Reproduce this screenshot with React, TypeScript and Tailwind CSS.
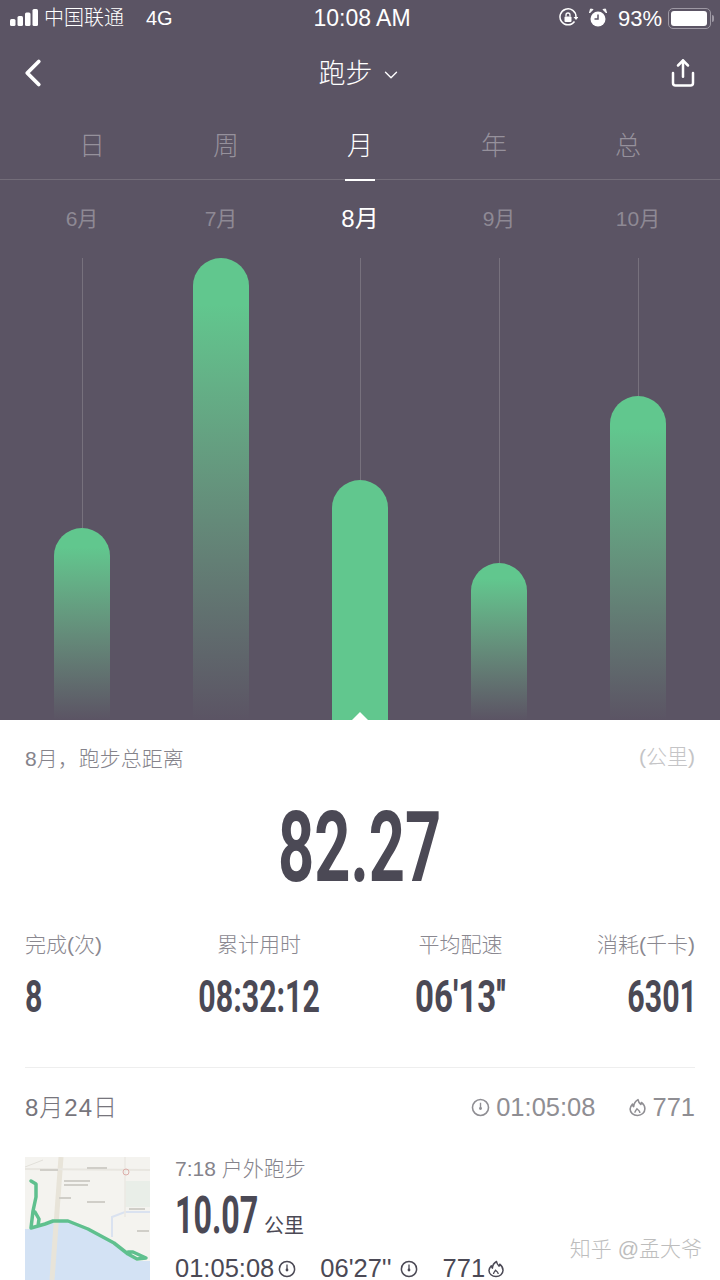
import { ChevronDown, ChevronLeft, Share } from 'lucide-react'

const FONT = '"Liberation Sans", "Noto Sans CJK SC", sans-serif'

const tabs = ['日', '周', '月', '年', '总']

const months = [
  { label: '6月', height: 192 },
  { label: '7月', height: 462 },
  { label: '8月', height: 240, active: true },
  { label: '9月', height: 157 },
  { label: '10月', height: 324 },
]

function Signal() {
  return (
    <svg width="29" height="18" viewBox="0 0 29 18" fill="#fff">
      <rect x="0" y="10" width="5.500" height="7" rx="1.500" />
      <rect x="7.500" y="7" width="5.500" height="10" rx="1.500" />
      <rect x="15" y="3.500" width="5.500" height="13.500" rx="1.500" />
      <rect x="22.500" y="0" width="5.500" height="17" rx="1.500" />
    </svg>
  )
}

function RotationLock() {
  return (
    <svg width="20" height="20" viewBox="0 0 20 20" fill="none">
      <path d="M16.500 13.500A8 8 0 1 1 18 9" stroke="#fff" strokeWidth="1.500" />
      <path d="M15.500 9h5l-2.500 3z" fill="#fff" />
      <rect x="6.500" y="8.500" width="7" height="5.500" rx="1" fill="#fff" />
      <path d="M8 8.500V7a2 2 0 0 1 4 0v1.500" stroke="#fff" strokeWidth="1.300" />
    </svg>
  )
}

function Alarm() {
  return (
    <svg width="20" height="20" viewBox="0 0 20 20">
      <circle cx="10" cy="11" r="7.500" fill="#fff" />
      <path d="M10 6.500V11H6.500" stroke="#5b5464" strokeWidth="1.500" fill="none" />
      <path d="M1.500 5 5 1.500 2.500 1zM18.500 5 15 1.500 17.500 1z" fill="#fff" stroke="#fff" />
    </svg>
  )
}

function Battery() {
  return (
    <div className="flex items-center">
      <div className="w-[43px] h-[21px] rounded-[5px] border border-[#9d98a3] p-[2px]">
        <div className="w-[36px] h-full rounded-[3px] bg-white" />
      </div>
      <div className="w-[2px] h-[7px] ml-px rounded-r-sm bg-[#9d98a3]" />
    </div>
  )
}

function Gauge({ size, color }: { size: number; color: string }) {
  return (
    <svg width={size} height={size} viewBox="0 0 18 18" fill="none">
      <circle cx="9" cy="9" r="7.600" stroke={color} strokeWidth="1.500" />
      <path d="M9 4.500v5" stroke={color} strokeWidth="1.300" />
      <circle cx="9" cy="10" r="1.400" fill={color} />
    </svg>
  )
}

function Flame({ size, color }: { size: number; color: string }) {
  return (
    <svg width={size} height={size} viewBox="0 0 18 18" fill="none">
      <path
        d="M9.500 1.500c.4 2.400 1.300 3.500 2.600 4.600.4-.6.6-1.200.6-1.900 2 1.600 3.300 3.700 3.300 6 0 3.600-3 6.300-7 6.300s-7-2.600-7-6c0-2.100 1.100-3.400 2.300-4.700.1 1 .4 1.700 1.100 2.300C5.500 5.300 7 3 9.500 1.500z"
        stroke={color}
        strokeWidth="1.500"
        strokeLinejoin="round"
      />
      <path d="M6.500 14c0-1.700 1.300-2.300 2-3.800 1.300 1 2.800 2.200 2.800 3.900" stroke={color} strokeWidth="1.300" />
    </svg>
  )
}

function RouteMap() {
  return (
    <svg width="125" height="123" viewBox="0 0 125 123" className="shrink-0">
      <rect width="125" height="123" fill="#f4f3ef" />
      <path d="M0 72 L6 72 L28 65 L43 65 L63 73 L89 87 L103 98 L112 104 L125 104 V123 H0z" fill="#d3e2f4" />
      <path d="M100 24h25v26h-25z" fill="#e9eee8" />
      <path d="M36 0 L27 123" stroke="#e8e4d9" strokeWidth="5" />
      <path d="M0 12 L125 13" stroke="#e8e6e0" strokeWidth="2" />
      <path d="M0 10 L18 3" stroke="#e2e0da" strokeWidth="1" />
      <path d="M87 80 V60 L100 55 H125" stroke="#dae2f0" strokeWidth="2" fill="none" />
      <path d="M100 0 V60" stroke="#ebe9e3" strokeWidth="1.500" />
      <g fill="#d0cec8">
        <rect x="15" y="12" width="18" height="2" />
        <rect x="62" y="10" width="20" height="2" />
        <rect x="39" y="23" width="26" height="2" />
        <rect x="39" y="27" width="24" height="2" />
        <rect x="34" y="40" width="12" height="2" />
        <rect x="62" y="44" width="18" height="2" />
        <rect x="104" y="51" width="16" height="2" />
        <rect x="112" y="73" width="12" height="2" />
      </g>
      <circle cx="101" cy="15" r="3" fill="none" stroke="#dcaea9" />
      <path
        d="M6 24 L11 27 L11 40 L8 54 L6 71 L13 69 L14 62 L10 55 L8 54 M6 71 L20 67 L28 64 L43 64 L63 72 L89 86 L103 97 L112 102 L121 101 L108 95 L103 95"
        fill="none"
        stroke="#5fc08e"
        strokeWidth="3.500"
        strokeLinejoin="round"
        strokeLinecap="round"
      />
    </svg>
  )
}

export default function App() {
  return (
    <div className="w-[720px] h-[1280px] overflow-hidden bg-white" style={{ fontFamily: FONT }}>
      <div className="relative h-[720px] bg-[#5b5464] text-white">
        <div className="flex items-center justify-between h-[36px] pl-[10px] pr-[6px]">
          <div className="flex items-center w-[220px] text-[20px] font-light">
            <Signal />
            <span className="ml-[5px]">中国联通</span>
            <span className="ml-[22px]">4G</span>
          </div>
          <div className="text-[23px]">10:08 AM</div>
          <div className="flex items-center justify-end w-[220px] text-[22px]">
            <RotationLock />
            <div className="ml-[10px]"><Alarm /></div>
            <span className="ml-[10px] mr-[6px]">93%</span>
            <Battery />
          </div>
        </div>

        <div className="flex items-center justify-between h-[74px] pl-[10px] pr-[22px]">
          <ChevronLeft size={46} strokeWidth={2} />
          <div className="flex items-center ml-[-4px] mt-[3px] text-[27px] font-light">
            跑步
            <ChevronDown size={22} strokeWidth={1.500} className="ml-[7px]" />
          </div>
          <Share size={30} strokeWidth={2} />
        </div>

        <div className="relative flex justify-center h-[70px] border-b border-[#736d79]">
          {tabs.map(t => (
            <div
              key={t}
              className={`relative w-[134px] pt-[16px] text-center text-[26px] font-light leading-[40px] ${t === '月' ? 'text-white' : 'text-[#96919c]'}`}
            >
              {t}
              {t === '月' && (
                <div className="absolute left-[52px] bottom-[-2px] w-[30px] h-[2px] bg-white" />
              )}
            </div>
          ))}
        </div>

        <div className="flex justify-center h-[78px]">
          {months.map(m => (
            <div
              key={m.label}
              className={`w-[139px] pt-[24px] text-center leading-[30px] ${m.active ? 'text-[24px] text-white' : 'text-[21px] text-[#8e8994]'}`}
            >
              {m.label}
            </div>
          ))}
        </div>

        <div className="flex justify-center h-[462px]">
          {months.map(m => (
            <div key={m.label} className="relative flex flex-col items-center w-[139px]">
              <div className="w-px flex-1 bg-[#77717d]" />
              <div
                className={`w-[56px] rounded-t-[28px] ${m.active ? 'bg-[#61c78e]' : 'bg-gradient-to-b from-[#61c78e] from-10% to-[#5b5464]'}`}
                style={{ height: m.height }}
              />
              {m.active && (
                <div className="absolute bottom-0 w-0 h-0 border-x-[8px] border-x-transparent border-b-[8px] border-b-white" />
              )}
            </div>
          ))}
        </div>
      </div>

      <div className="relative px-[25px]">
        <div className="flex justify-between pt-[25px] h-[63px] leading-[28px]">
          <span className="text-[21px] font-light text-[#85838b]">8月，跑步总距离</span>
          <span className="text-[21px] font-light text-[#c4c4c6] -mt-[2px]">(公里)</span>
        </div>

        <div className="flex justify-center h-[147px] pt-[1px] text-[#4b4955]" style={{ fontFamily: 'Roboto, sans-serif' }}>
          <span className="inline-block h-[128px] scale-x-[0.645] text-[98px] font-bold leading-[128px] whitespace-nowrap">82.27</span>
        </div>

        <div className="flex h-[42px] text-[21px] font-light leading-[30px] text-[#8a8890]">
          <div className="w-[78px] whitespace-nowrap">完成(次)</div>
          <div className="flex justify-center w-[122px] ml-[95px] whitespace-nowrap">累计用时</div>
          <div className="flex justify-center w-[91px] ml-[95px] whitespace-nowrap">平均配速</div>
          <div className="ml-auto text-right whitespace-nowrap">消耗(千卡)</div>
        </div>

        <div
          className="flex h-[96px] border-b border-[#eeeeee] text-[44px] font-bold leading-[50px] text-[#4b4955]"
          style={{ fontFamily: 'Roboto, sans-serif' }}
        >
          <div className="w-[78px]"><span className="inline-block origin-left scale-x-[0.69]">8</span></div>
          <div className="flex justify-center w-[122px] ml-[95px] whitespace-nowrap"><span className="inline-block h-[50px] scale-x-[0.69]">08:32:12</span></div>
          <div className="flex justify-center w-[91px] ml-[95px] whitespace-nowrap"><span className="inline-block h-[50px] scale-x-[0.75]">06'13''</span></div>
          <div className="ml-auto -mr-[2px]"><span className="inline-block origin-right scale-x-[0.69]">6301</span></div>
        </div>

        <div className="flex items-center justify-between h-[79px] text-[#8f8e93]">
          <span className="text-[24px] font-light tracking-[1px] text-[#77757c]">8月24日</span>
          <div className="flex items-center text-[25.500px] font-light">
            <Gauge size={19} color="#8f8e93" />
            <span className="ml-[6px]">01:05:08</span>
            <span className="ml-[33px]"><Flame size={19} color="#8f8e93" /></span>
            <span className="ml-[5px]">771</span>
          </div>
        </div>

        <div className="flex items-start h-[133px] pt-[10px] overflow-hidden">
          <RouteMap />
          <div className="ml-[25px] flex flex-col">
            <div className="text-[21px] font-light leading-[24px] text-[#85838b]">7:18 户外跑步</div>
            <div className="flex items-end h-[64px] text-[#4b4955]">
              <span
                className="inline-block w-[82px] h-[58px] origin-left scale-x-[0.62] text-[52px] font-bold leading-[58px] whitespace-nowrap"
                style={{ fontFamily: 'Roboto, sans-serif' }}
              >
                10.07
              </span>
              <span className="ml-[7px] mb-[6px] text-[20px] leading-[26px]">公里</span>
            </div>
            <div className="flex items-center h-[23px] mt-[12px] text-[25.500px] leading-[23px] font-light text-[#4b4955]">
              <span>01:05:08</span>
              <span className="ml-[4px]"><Gauge size={18} color="#4b4955" /></span>
              <span className="ml-[24px]">06'27''</span>
              <span className="ml-[8px]"><Gauge size={18} color="#4b4955" /></span>
              <span className="ml-[25px]">771</span>
              <span className="ml-[2px]"><Flame size={18} color="#4b4955" /></span>
            </div>
          </div>
        </div>

        <div className="absolute right-[18px] bottom-[16px] text-[21px] font-light text-[#bdbdbd]">知乎 @孟大爷</div>
      </div>
    </div>
  )
}
